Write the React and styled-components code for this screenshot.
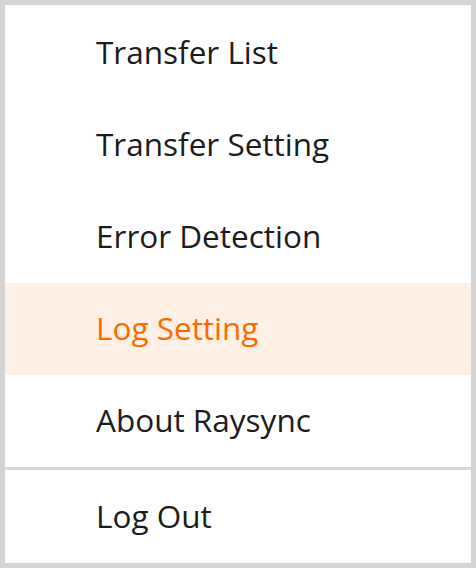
import React from "react";
import styled, { createGlobalStyle } from "styled-components";

const Global = createGlobalStyle`
  html, body { margin: 0; padding: 0; background: #ffffff; }
  * { box-sizing: border-box; }
`;

const Menu = styled.nav`
  width: 476px;
  height: 568px;
  border: 5px solid #d4d4d4;
  background: #ffffff;
  display: flex;
  flex-direction: column;
  font-family: "Open Sans", "Noto Sans", sans-serif;
`;

const Group = styled.div`
  display: flex;
  flex-direction: column;
  padding-top: 2px;
`;

const Item = styled.div`
  height: ${(p) => p.$h || 92}px;
  display: flex;
  align-items: center;
  padding-left: 91px;
  padding-bottom: 3px;
  font-size: 31.5px;
  color: ${(p) => (p.$active ? "#ff6a00" : "#1c1c1c")};
  background: ${(p) => (p.$active ? "#fff0e6" : "transparent")};
`;

const Divider = styled.div`
  height: 3px;
  background: #d8d8d8;
`;

const items = ["Transfer List", "Transfer Setting", "Error Detection", "Log Setting", "About Raysync"];

export default function App() {
  return (
    <>
      <Global />
      <Menu>
        <Group>
          {items.map((t) => (
            <Item key={t} $active={t === "Log Setting"}>
              {t}
            </Item>
          ))}
        </Group>
        <Divider />
        <Item $h={93}>Log Out</Item>
      </Menu>
    </>
  );
}
